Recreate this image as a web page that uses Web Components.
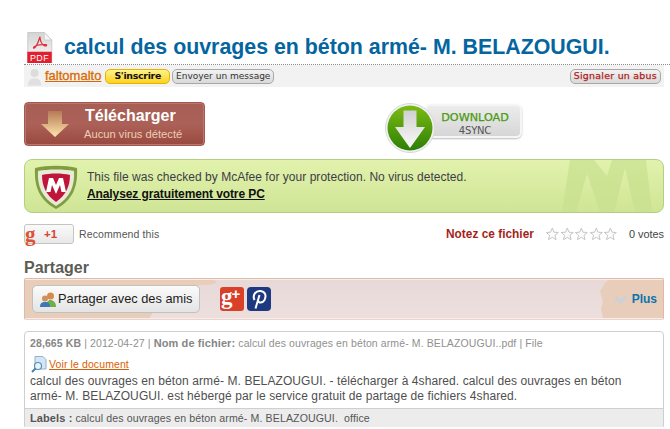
<!DOCTYPE html>
<html lang="fr">
<head>
<meta charset="utf-8">
<title>calcul des ouvrages</title>
<style>
  html, body { margin: 0; background: #fff; }
  body { font-family: "Liberation Sans", Arial, sans-serif; overflow: hidden; }
  page-root { height: 429px; }
</style>
</head>
<body>
<page-root>
  <file-title>calcul des ouvrages en béton armé- M. BELAZOUGUI.</file-title>
  <user-bar name="faltomalto"></user-bar>
  <download-row></download-row>
  <mcafee-banner></mcafee-banner>
  <rate-row></rate-row>
  <share-bar></share-bar>
  <file-info></file-info>
</page-root>

<script>
class PageRoot extends HTMLElement {
    connectedCallback() {
        this.attachShadow({mode: 'open'}).innerHTML = `
            <style>
              :host { display: block; width: 646px; padding-left: 24px; box-sizing: content-box; }
            </style>
            <slot></slot>
        `;
    }
}

class FileTitle extends HTMLElement {
    connectedCallback() {
        this.attachShadow({mode: 'open'}).innerHTML = `
            <style>
              :host { display: flex; align-items: flex-end; height: 64px; border-bottom: 1px dotted #8c8c8c; box-sizing: content-box; }
              svg { width: 26px; height: 31px; margin: 0 11px 1px 3px; flex: none; display: block; }
              h1 { margin: 0 0 2px; font: bold 21.350px/30px "Liberation Sans", Arial, sans-serif; color: #04659f; white-space: nowrap; }
            </style>
            <svg viewBox="0 0 27 33">
              <defs><linearGradient id="pg" x1="0" y1="0" x2="0" y2="1"><stop offset="0" stop-color="#d4d4d4"/><stop offset="1" stop-color="#fbfbfb"/></linearGradient></defs>
              <path d="M.5.5H18L26 8.500V32.500H.5Z" fill="url(#pg)" stroke="#c8c8c8"/>
              <path d="M18 .5V8.500H26Z" fill="#f4f4f4" stroke="#c4c4c4" stroke-width=".7"/>
              <rect y="21" width="26" height="12" fill="#e0202e"/>
              <path d="M13.500 5C12 9 12 11 9 15.500 7 18 6 17.500 7 16 9 14 14 13 20 13.500 21.500 14 20 15.500 18 14.500 15 12.500 13.500 9 13.500 5Z" fill="none" stroke="#e0303a" stroke-width="1.300"/>
              <text x="13" y="31" font-family="Liberation Sans, sans-serif" font-size="9.500" fill="#fff" text-anchor="middle" letter-spacing=".4">PDF</text>
            </svg>
            <h1><slot></slot></h1>
        `;
    }
}

class PillButton extends HTMLElement {
    connectedCallback() {
        this.attachShadow({mode: 'open'}).innerHTML = `
            <style>
              :host { display: inline-block; height: 13px; padding: 0 3px; border: 1px solid #a8a8a8; border-radius: 5px;
                      font: 9px/12px "DejaVu Sans", Verdana, sans-serif; color: #333; white-space: nowrap;
                      background: linear-gradient(#f2f2f2, #d9d9d9); box-sizing: content-box; }
              :host([kind="yellow"]) { border-color: #e5b400; background: linear-gradient(#fff38a, #fcd21f); color: #111; font-size: 9.400px; font-weight: bold; padding: 0 8px; letter-spacing: -.03em; }
              :host([kind="red"]) { color: #b3201c; font-size: 9.400px; letter-spacing: .03em; -webkit-text-stroke: .25px #b3201c; }
            </style>
            <slot></slot>
        `;
    }
}

class UserBar extends HTMLElement {
    connectedCallback() {
        const name = this.getAttribute("name");
        this.attachShadow({mode: 'open'}).innerHTML = `
            <style>
              :host { display: flex; align-items: center; width: 640px; height: 22px; background: #f2f2f2; box-sizing: border-box; padding-right: 3px; }
              svg { width: 16px; height: 19px; margin: 0 2px 0 3px; flex: none; }
              a { font: 13px/18px "Liberation Sans", Arial, sans-serif; -webkit-text-stroke: .3px #d96a00; color: #d96a00; text-decoration: underline; margin-right: 4px; }
              pill-button + pill-button { margin-left: 2px; }
              .end { margin-left: auto; }
            </style>
            <svg viewBox="0 0 18 20"><circle cx="8.500" cy="6" r="4.500" fill="#dcdcdc"/><path d="M1 20C1 14 5 12 8.500 12S16 14 16 20Z" fill="#e0e0e0"/></svg>
            <a>${name}</a>
            <pill-button kind="yellow">S'inscrire</pill-button>
            <pill-button>Envoyer un message</pill-button>
            <pill-button class="end" kind="red">Signaler un abus</pill-button>
        `;
    }
}

class DownloadRow extends HTMLElement {
    connectedCallback() {
        this.attachShadow({mode: 'open'}).innerHTML = `
            <style>
              :host { display: flex; align-items: flex-start; height: 52px; padding-top: 15px; box-sizing: content-box; }
              .main { width: 181px; height: 44px; box-sizing: border-box; border: 1px solid #a9564c; border-radius: 4px; background: linear-gradient(#a65e55, #ac6158 50%, #99493f); box-shadow: inset 0 0 0 1px #b8776e;
                      display: flex; align-items: center; color: #fff; }
              .main svg { width: 28px; height: 26px; margin: 0 16px 0 16px; flex: none; }
              .lbl { display: flex; flex-direction: column; }
              b { font: bold 16px/18px "Liberation Sans", Arial, sans-serif; }
              span { font: 11.200px/14px "Liberation Sans", Arial, sans-serif; color: #eccdb6; margin-top: 2px; margin-left: -1px; }
              .sync { position: relative; margin-left: 180px; width: 138px; height: 50px; margin-top: 1px; }
              .plate { position: absolute; left: 40px; top: 1px; width: 97px; height: 34px; border: 2px solid #f5f5f5; border-radius: 6px; box-sizing: border-box; background: linear-gradient(#ececec, #d6d6d6); box-shadow: 0 1px 2px #bbb;
                       display: flex; flex-direction: column; align-items: center; padding: 5px 0 0 3px; font: 10px/13px "DejaVu Sans", sans-serif; letter-spacing: -.02em; color: #555; }
              .plate i { font-style: normal; color: #4b9a10; font-size: 11.200px; letter-spacing: 0; line-height: 13px; -webkit-text-stroke: .25px #4b9a10; }
              .sync svg { position: absolute; left: 0; top: 0; width: 50px; height: 50px; }
            </style>
            <div class="main">
              <svg viewBox="0 0 28 26"><defs><linearGradient id="a" x1="0" y1="0" x2="0" y2="1"><stop offset="0" stop-color="#b57a55"/><stop offset="1" stop-color="#ffe6ad"/></linearGradient></defs><path d="M7 0H21V13H28L14 26 0 13H7Z" fill="url(#a)"/></svg>
              <div class="lbl"><b>Télécharger</b><span>Aucun virus détecté</span></div>
            </div>
            <div class="sync">
              <div class="plate"><i>DOWNLOAD</i>4SYNC</div>
              <svg viewBox="0 0 50 50">
                <defs><linearGradient id="g" x1="0" y1="0" x2="0" y2="1"><stop offset="0" stop-color="#7bbb12"/><stop offset="1" stop-color="#2d7f06"/></linearGradient>
                <linearGradient id="w" x1="0" y1="0" x2="0" y2="1"><stop offset="0" stop-color="#d0d0d0"/><stop offset="1" stop-color="#fafafa"/></linearGradient></defs>
                <circle cx="25" cy="25" r="24.500" fill="#f2f2f2" stroke="#d8d8d8"/>
                <circle cx="25" cy="25" r="22.500" fill="url(#g)"/>
                <path d="M18.500 7.500H31.500V24H40L25 45 10 24H18.500Z" fill="url(#w)"/>
              </svg>
            </div>
        `;
    }
}

class McafeeBanner extends HTMLElement {
    connectedCallback() {
        this.attachShadow({mode: 'open'}).innerHTML = `
            <style>
              :host { display: flex; position: relative; overflow: hidden; align-items: flex-start; width: 640px; height: 54px; margin-top: 5px; box-sizing: border-box; border: 1px solid #b3cf86; border-radius: 8px; background: linear-gradient(#e2f2ad, #cfe595); }
              svg.shield { width: 46px; height: 46px; flex: none; margin: 4px 8px 0 8px; }
              svg.mark { position: absolute; right: 11px; top: 0; width: 90px; height: 52px; }
              div { position: relative; font: 12px/17px "Liberation Sans", Arial, sans-serif; color: #3d3d47; padding-top: 9px; letter-spacing: .03px; }
              a { display: block; font-weight: bold; color: #111; text-decoration: underline; letter-spacing: -.1px; }
            </style>
            <svg class="mark" viewBox="0 0 90 52"><path d="M0 52 8 0H32L45 16 50 0H84L90 52H73L63 8 52 52H38L25 14 14 52Z" fill="#c8e08f" opacity=".7"/></svg>
            <svg class="shield" viewBox="0 0 46 46">
              <path d="M2 4C14 1 32 1 44 4 45 22 40 36 23 45 6 36 1 22 2 4Z" fill="#7f9e42"/>
              <path d="M5 7C15 5 31 5 41 7 42 22 37 34 23 42 9 34 4 22 5 7Z" fill="#e8ead8"/>
              <path d="M9 11C17 9 29 9 37 11 37 22 33 31 23 38 13 31 9 22 9 11Z" fill="#c0153a"/>
              <path d="M13 28 16 14H20L23 21 26 14H30L33 28H28.500L27 21 23 30 19 21 17.500 28Z" fill="#fff"/>
            </svg>
            <div>This file was checked by McAfee for your protection. No virus detected.<a>Analysez gratuitement votre PC</a></div>
        `;
    }
}

class RateRow extends HTMLElement {
    connectedCallback() {
        const star = `<svg viewBox="0 0 14 14"><path d="M7 1 8.700 5.200 13 5.500 9.700 8.300 10.800 12.700 7 10.300 3.200 12.700 4.300 8.300 1 5.500 5.300 5.200Z" fill="#fcfcfc" stroke="#c6c6c6"/></svg>`;
        this.attachShadow({mode: 'open'}).innerHTML = `
            <style>
              :host { display: flex; align-items: center; width: 640px; height: 20px; margin-top: 11px; font: 11px/14px "Liberation Sans", Arial, sans-serif; color: #555; }
              .plus { width: 50px; height: 20px; box-sizing: border-box; border: 1px solid #c4c4c4; border-radius: 3px; background: linear-gradient(#fafafa, #e8e8e8); display: flex; align-items: center; margin-right: 5px; }
              .plus i { flex: none; width: 12px; font: bold 21px/16px "Liberation Serif", serif; color: #dc5233; }
              .plus b { color: #d9432c; font-size: 11.500px; margin-left: 7px; }
              .rec { font-size: 10.500px; letter-spacing: .01em; }
              .note { margin-left: auto; color: #a51f1c; font: bold 11.900px/14px "Liberation Sans", Arial, sans-serif; }
              .stars { display: flex; margin: 0 11px 0 11px; }
              .stars svg { width: 14.600px; height: 14px; display: block; }
              .votes { font-size: 10.900px; color: #444; }
            </style>
            <div class="plus"><i>g</i><b>+1</b></div>
            <span class="rec">Recommend this</span>
            <span class="note">Notez ce fichier</span>
            <div class="stars">${star.repeat(5)}</div>
            <span class="votes">0 votes</span>
        `;
    }
}

class ShareBar extends HTMLElement {
    connectedCallback() {
        this.attachShadow({mode: 'open'}).innerHTML = `
            <style>
              :host { display: block; margin-top: 14px; width: 640px; }
              h2 { margin: 0; font: bold 16px/20px "Liberation Sans", Arial, sans-serif; color: #5c5c54; }
              .bar { position: relative; height: 42px; box-sizing: border-box; border: 1px solid #e2b8a7; border-bottom-color: #eed3cb; border-radius: 2px; background: linear-gradient(#e7d9d7, #ecdfdd); display: flex; align-items: center; padding: 0 6px 0 7px; box-shadow: inset 0 0 0 1px #f6ecea; }
              .wash { position: absolute; left: 0; top: 1px; height: 38px; width: 638px; }
              .btn { position: relative; width: 168px; height: 28px; box-sizing: border-box; border: 1px solid #c2c2bd; border-radius: 5px; background: linear-gradient(#fbfbfb, #e4e4e4); display: flex; align-items: center; font: 12.800px/14px "Liberation Sans", Arial, sans-serif; color: #1c1c1c; white-space: nowrap; }
              .btn svg { width: 18px; height: 16px; margin: 0 1px 0 6px; flex: none; }
              .soc { position: relative; width: 24px; height: 24px; margin-left: 3px; display: block; flex: none; }
              .gp { display: flex; align-items: flex-start; margin-left: 20px; padding-left: 1px; box-sizing: border-box; border-radius: 3px; background: #d8402a; color: #fff; font: bold 23px/20px "Liberation Serif", serif; font-style: normal; }
              .gp em { font: bold 15px/13px "Liberation Sans", sans-serif; font-style: normal; margin-left: -1px; }
              .more { position: relative; margin-left: auto; font: bold 12px/14px "Liberation Sans", Arial, sans-serif; color: #0a74ad; display: flex; align-items: center; gap: 6px; }
              .more svg { width: 11px; height: 9px; }
            </style>
            <h2>Partager</h2>
            <div class="bar">
              <svg class="wash" viewBox="0 0 638 40" preserveAspectRatio="none">
                <path d="M0 0H188C195 2 190 4 185 5 170 4 160 10 150 14 140 30 128 30 125 40H0Z" fill="#e8cdbb"/>
                <path d="M638 0H584C578 3 579 8 575 11 576 18 580 22 576 30L578 40H638Z" fill="#e8cdbb"/>
              </svg>
              <div class="btn">
                <svg viewBox="0 0 18 16"><circle cx="11.500" cy="5" r="3.500" fill="#d98a4a"/><path d="M7 16C7 11 9 9 11.500 9S17 11 17 16Z" fill="#6fae4a"/><circle cx="6" cy="7.500" r="3" fill="#c9925f"/><path d="M1 16C1 12 3 11 6 11S11 12 11 16Z" fill="#3d78b5"/></svg>
                Partager avec des amis
              </div>
              <div class="soc gp"><span>g</span><em>+</em></div>
              <svg class="soc" viewBox="0 0 24 24"><rect width="24" height="24" rx="4" fill="#1d3a80"/><path d="M8.500 21.500 12.500 8M7.500 13C5 8 9 3.500 13.500 4 18.500 4.500 19.500 9 17.500 13 15.500 16.500 11.500 16 11 13.500" fill="none" stroke="#fff" stroke-width="2"/></svg>
              <span class="more">
                <svg viewBox="0 0 11 9"><path d="M0 0 5.500 4 11 0V4L5.500 9 0 4Z" fill="#c8d2d8"/></svg>
                Plus
              </span>
            </div>
        `;
    }
}

class FileInfo extends HTMLElement {
    connectedCallback() {
        this.attachShadow({mode: 'open'}).innerHTML = `
            <style>
              :host { display: block; margin-top: 11px; width: 640px; height: 96px; box-sizing: border-box; border: 1px solid #cfcfcf; border-radius: 4px 4px 0 0; font: 12px/15px "Liberation Sans", Arial, sans-serif; color: #4f4f4f; }
              .meta { font-size: 10.500px; line-height: 13px; color: #909090; padding: 5px 5px 0; height: 18px; box-sizing: content-box; letter-spacing: .01em; }
              .meta b { color: #868686; }
              .meta b.nom { font-size: 11px; letter-spacing: .1px; }
              .view { display: flex; align-items: center; height: 16px; padding-left: 6px; margin-top: 1px; }
              .view svg { width: 16px; height: 17px; margin-right: 2px; flex: none; }
              .view a { font-size: 10.500px; color: #d95e00; text-decoration: underline; letter-spacing: .01em; }
              p { margin: 2px 0 0; padding: 0 5px; height: 30px; letter-spacing: .008em; white-space: nowrap; }
              .labels { height: 19px; margin-top: 4px; padding: 0 5px; box-sizing: border-box; background: #ececec; border-top: 1px solid #cfcfcf; font-size: 10.600px; line-height: 18px; color: #555; white-space: pre; letter-spacing: .01em; }
              .labels b { font-size: 11px; }
            </style>
            <div class="meta"><b>28,665 KB</b> | 2012-04-27 | <b class="nom">Nom de fichier:</b> calcul des ouvrages en béton armé- M. BELAZOUGUI..pdf | File</div>
            <div class="view">
              <svg viewBox="0 0 16 17"><path d="M4 .5H12L15 3.500V13H4Z" fill="#d3e6f5" stroke="#8eb3d0"/><circle cx="7" cy="10" r="3.500" fill="#e9f3fa" stroke="#5b8fb5" stroke-width="1.200"/><path d="M4.500 12.500 1 16" stroke="#4c7ea6" stroke-width="2"/></svg>
              <a>Voir le document</a>
            </div>
            <p>calcul des ouvrages en béton armé- M. BELAZOUGUI. - télécharger à 4shared. calcul des ouvrages en béton<br>armé- M. BELAZOUGUI. est hébergé par le service gratuit de partage de fichiers 4shared.</p>
            <div class="labels"><b>Labels :</b> calcul des ouvrages en béton armé- M. BELAZOUGUI.  office</div>
        `;
    }
}

window.customElements.define("page-root", PageRoot);
window.customElements.define("file-title", FileTitle);
window.customElements.define("pill-button", PillButton);
window.customElements.define("user-bar", UserBar);
window.customElements.define("download-row", DownloadRow);
window.customElements.define("mcafee-banner", McafeeBanner);
window.customElements.define("rate-row", RateRow);
window.customElements.define("share-bar", ShareBar);
window.customElements.define("file-info", FileInfo);
</script>
</body>
</html>
